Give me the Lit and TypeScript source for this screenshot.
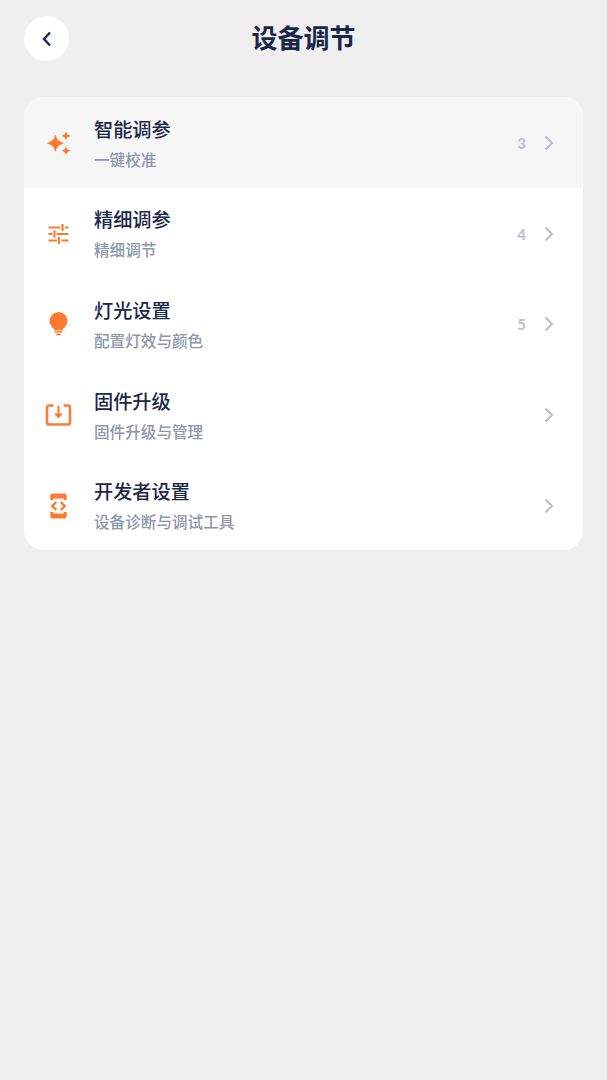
import { LitElement, html, css, svg } from "lit";
import { customElement } from "lit/decorators.js";

const O = "#ff7a30";
const icons = {
  spark: svg`<path fill="${O}" d="M9.600 3.800c1.200 4.600 2.900 6.500 8 8.200v.6c-5.100 1.700-6.800 3.600-8 8.200h-.4C8 16.200 6.300 14.300 1.400 12.600V12c4.900-1.700 6.600-3.600 7.800-8.200z"/><path fill="${O}" d="M20.200 .8c.5 2.300 1.400 3.200 3.800 3.800v.6c-2.400.6-3.300 1.500-3.800 3.800h-.4c-.5-2.300-1.400-3.200-3.800-3.800v-.6c2.400-.6 3.300-1.500 3.800-3.800zM20.200 15.600c.5 2.300 1.400 3.200 3.800 3.800v.6c-2.400.6-3.300 1.500-3.800 3.800h-.4c-.5-2.300-1.400-3.200-3.800-3.800v-.6c2.400-.6 3.300-1.500 3.800-3.800z"/>`,
  tune: svg`<path fill="none" stroke="${O}" stroke-width="2.200" d="M2.500 5.500h11.500M19 5.500h3.500M16.500 2v7M2.500 12h4M10.500 12h12M8.500 8.500v7M2.500 18.500h8.500M15.500 18.500h7M13 15v7"/>`,
  bulb: svg`<circle fill="${O}" cx="12.500" cy="9" r="9"/><path fill="${O}" d="M8 15h9v3H8z"/><path fill="none" stroke="${O}" stroke-width="1.800" d="M8.500 19.700h8M10.300 22.300h4.400"/>`,
  down: svg`<path fill="none" stroke="${O}" stroke-width="2.500" stroke-linejoin="round" d="M7.500 2.500H3a2 2 0 0 0-2 2v15a2 2 0 0 0 2 2h19a2 2 0 0 0 2-2v-15a2 2 0 0 0-2-2h-4.500"/><path fill="none" stroke="${O}" stroke-width="2.200" d="M12.500 3v9"/><path fill="${O}" d="M8 10.500h9l-4.500 5z"/>`,
  dev: svg`<path fill="${O}" d="M6.500 -0.500h12a2.200 2.200 0 0 1 2.200 2.200V6h-3V4.500H7.300V6h-3V1.700a2.200 2.200 0 0 1 2.200-2.200zM4.300 18h3v1.500h10.400V18h3v4.300a2.200 2.200 0 0 1-2.200 2.200h-12a2.200 2.200 0 0 1-2.200-2.200z"/><path fill="none" stroke="${O}" stroke-width="2.400" d="M10.300 8 6.300 12l4 4M14.700 8l4 4-4 4"/>`,
};

const rows = [
  { icon: icons.spark, t: "智能调参", s: "一键校准", n: "3", hi: true },
  { icon: icons.tune, t: "精细调参", s: "精细调节", n: "4" },
  { icon: icons.bulb, t: "灯光设置", s: "配置灯效与颜色", n: "5" },
  { icon: icons.down, t: "固件升级", s: "固件升级与管理", n: "" },
  { icon: icons.dev, t: "开发者设置", s: "设备诊断与调试工具", n: "" },
];

@customElement("app-root")
export class AppRoot extends LitElement {
  static styles = css`
    :host {
      display: block;
      min-height: 1080px;
      background: #efefef;
      box-sizing: border-box;
      padding: 16px 24px 0;
      font-family: "Noto Sans CJK SC", "Noto Sans", sans-serif;
    }
    .head {
      display: grid;
      grid-template-columns: 45px 1fr 45px;
      align-items: center;
      height: 45px;
      margin-bottom: 36px;
    }
    .back {
      width: 45px;
      height: 45px;
      border-radius: 50%;
      background: #fff;
      display: flex;
      align-items: center;
      justify-content: center;
    }
    h1 {
      margin: 0;
      padding-bottom: 3px;
      text-align: center;
      font-size: 26px;
      font-weight: 700;
      line-height: 42px;
      color: #1b2747;
    }
    .card {
      background: #fff;
      border-radius: 20px;
      overflow: hidden;
    }
    .row {
      height: 90.6px;
      display: flex;
      align-items: center;
      padding: 2px 28px 0 22px;
      box-sizing: border-box;
    }
    .row.hi { background: #f6f6f7; }
    .ic { width: 24px; height: 24px; flex: none; margin-right: 24px; overflow: visible; }
    .txt { flex: 1; min-width: 0; display: flex; flex-direction: column; gap: 8px; margin-top: -1px; }
    .t { font-size: 19.2px; line-height: 24px; font-weight: 500; color: #1b2747; }
    .s { font-size: 15.6px; line-height: 20px; font-weight: 500; color: #8d96ab; }
    .n {
      font-family: Lato, "Noto Sans", sans-serif;
      font-size: 15px;
      font-weight: 900;
      color: #bcc1cf;
      margin-right: 17px;
    }
    .ch { width: 12px; height: 18px; flex: none; }
  `;

  render() {
    return html`
      <div class="head">
        <div class="back">
          <svg width="12" height="18" viewBox="0 0 12 18"><path d="M9 2.500 3 9l6 6.500" fill="none" stroke="#1b2747" stroke-width="2.400"/></svg>
        </div>
        <h1>设备调节</h1>
        <div></div>
      </div>
      <div class="card">
        ${rows.map(
          (r) => html`
            <div class="row ${r.hi ? "hi" : ""}">
              <svg class="ic" viewBox="0 0 24 24">${r.icon}</svg>
              <div class="txt">
                <div class="t">${r.t}</div>
                <div class="s">${r.s}</div>
              </div>
              ${r.n ? html`<span class="n">${r.n}</span>` : ""}
              <svg class="ch" viewBox="0 0 12 18"><path d="M2.500 2.500 9 9l-6.500 6.500" fill="none" stroke="#bcc1cf" stroke-width="2.200"/></svg>
            </div>
          `
        )}
      </div>
    `;
  }
}
